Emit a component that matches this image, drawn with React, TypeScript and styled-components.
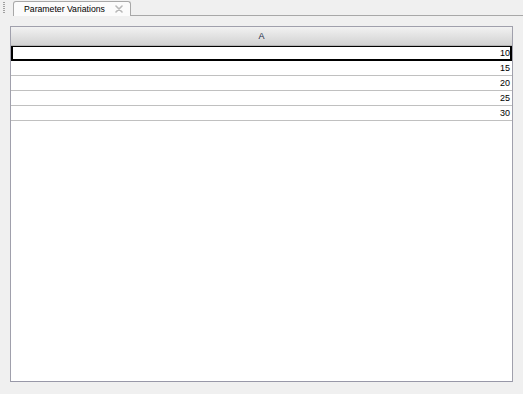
import React, { FunctionComponent } from "react";
import styled, { createGlobalStyle } from "styled-components";

const GlobalStyle = createGlobalStyle`
  html, body {
    margin: 0;
    padding: 0;
    background-color: #f0f0f0;
  }
  body {
    font-family: "Liberation Sans", Arial, sans-serif;
    font-size: 9px;
    color: #000000;
  }
`;

const StyledWindow = styled.div`
  width: 523px;
  height: 394px;
  background-color: #f0f0f0;
  display: flex;
  flex-direction: column;
`;

const StyledTabStrip = styled.div`
  display: flex;
  align-items: flex-end;
  height: 16px;
  padding-left: 3px;
`;

const StyledGrip = styled.div`
  width: 2px;
  height: 12px;
  margin-bottom: 2px;
  margin-right: 8px;
  background-image: linear-gradient(#a0a0a0 1px, transparent 1px);
  background-size: 2px 2px;
`;

const StyledTab = styled.div`
  display: flex;
  align-items: center;
  gap: 10px;
  height: 15px;
  padding: 0 7px 0 10px;
  background-color: #fbfbfb;
  border: 1px solid #a8a8a8;
  border-bottom: none;
  border-radius: 3px 3px 0 0;
  box-sizing: border-box;
  font-size: 8.7px;
  color: #000000;
`;

const StyledTabRest = styled.div`
  flex: 1;
  height: 16px;
  border-bottom: 1px solid #a8a8a8;
  box-sizing: border-box;
`;

const StyledBody = styled.div`
  flex: 1;
  padding: 10px 10px 12px 10px;
  display: flex;
`;

const StyledTable = styled.div`
  flex: 1;
  background-color: #ffffff;
  border: 1px solid #a0a0ac;
  border-bottom-color: #9898a8;
  display: flex;
  flex-direction: column;
`;

const StyledHeader = styled.div`
  height: 18px;
  display: flex;
  align-items: center;
  justify-content: center;
  background: linear-gradient(#f2f2f2, #d2d2d2);
  border-bottom: 1px solid #b4b4b4;
  color: #1a2a44;
  font-size: 9px;
`;

const StyledRow = styled.div<{ selected?: boolean }>`
  height: 15px;
  box-sizing: border-box;
  display: flex;
  align-items: center;
  justify-content: flex-end;
  padding-right: 2px;
  border-bottom: 1px solid #c0c0c0;
  font-size: 9px;
  color: #000000;
  ${({ selected }) =>
    selected &&
    `
    border: 1px solid #000000;
    border-width: 1px 2px 2px 2px;
    padding-right: 0;
  `}
`;

const CloseIcon: FunctionComponent = () => (
  <svg width="8" height="8" viewBox="0 0 8 8">
    <path
      d="M1 1 L7 7 M7 1 L1 7"
      stroke="#b8b8b8"
      strokeWidth="1.6"
      strokeLinecap="round"
    />
  </svg>
);

const values = [10, 15, 20, 25, 30];

const App: FunctionComponent = () => (
  <StyledWindow>
    <GlobalStyle />
    <StyledTabStrip>
      <StyledGrip />
      <StyledTab>
        <span>Parameter Variations</span>
        <CloseIcon />
      </StyledTab>
      <StyledTabRest />
    </StyledTabStrip>
    <StyledBody>
      <StyledTable>
        <StyledHeader>A</StyledHeader>
        {values.map((v, i) => (
          <StyledRow key={v} selected={i === 0}>
            {v}
          </StyledRow>
        ))}
      </StyledTable>
    </StyledBody>
  </StyledWindow>
);

export default App;
